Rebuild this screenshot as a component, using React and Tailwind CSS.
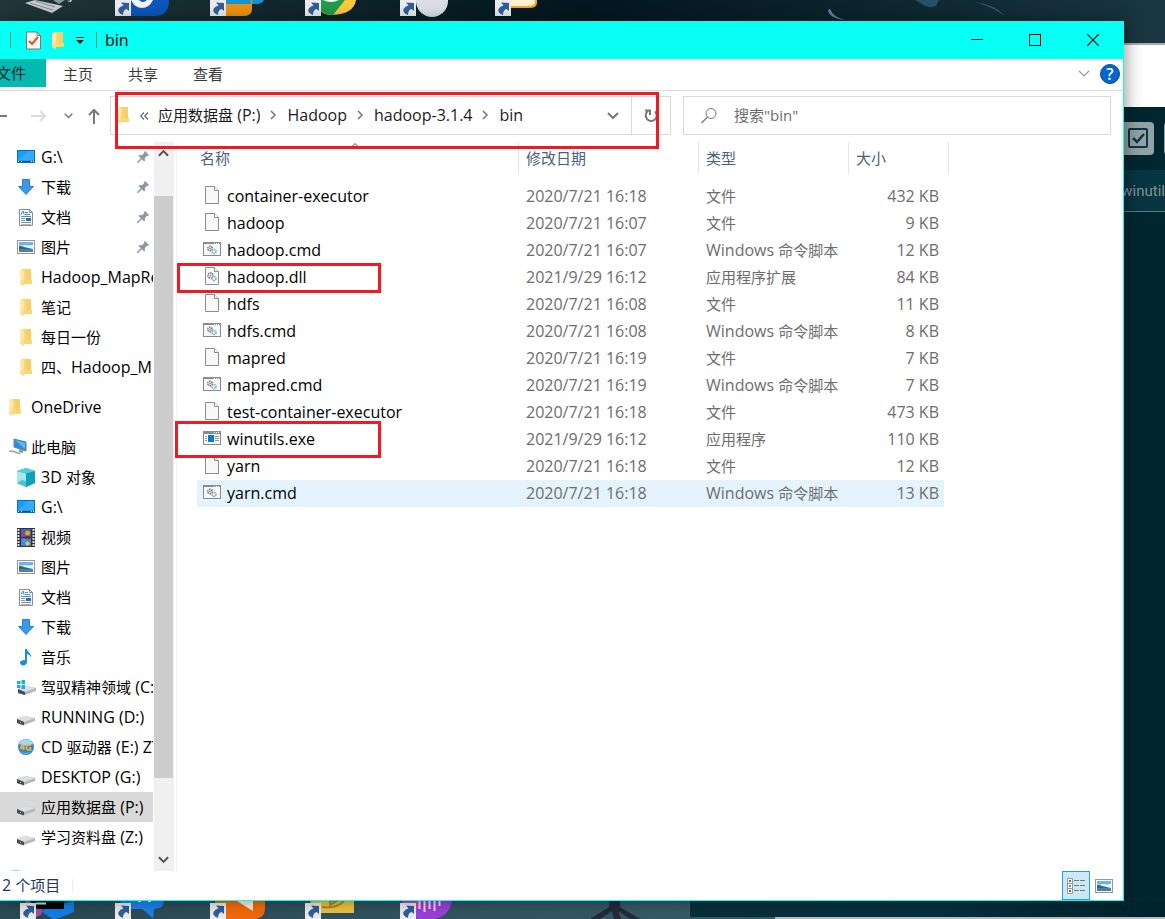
import React from 'react';

const FONT = "font-['Open_Sans','Noto_Sans_CJK_SC',sans-serif]";

/* ---------- small icons ---------- */

const FolderIcon = () => (
  <svg width="12" height="17" viewBox="0 0 12 17" className="shrink-0">
    <path d="M2 0h9v11h1v4H3z" fill="#f8d775" />
    <path d="M6 0h5v11H7z" fill="#f5cf68" />
    <path d="M0 0l4 2v15l-4-2z" fill="#fde9a9" />
    <path d="M0 15l4 2V8z" fill="#fbdf8e" />
  </svg>
);

const DriveScreenIcon = () => (
  <svg width="18" height="14" viewBox="0 0 18 14" className="shrink-0">
    <rect x="0.5" y="0.5" width="17" height="12" fill="#1a9fff" stroke="#0b6cb8" />
    <path d="M1 10L12 1h5v9z" fill="#33abff" />
    <rect x="1" y="11" width="16" height="1" fill="#0a4f8c" />
    <path d="M1 11h1v1H1zM4 11h1v1H4zM14 11h1v1h-1zM16 11h1v1h-1z" fill="#fff" />
  </svg>
);

const DownloadIcon = () => (
  <svg width="18" height="18" viewBox="0 0 18 18" className="shrink-0">
    <path d="M5.500 1.500h7v7h4L9 16.500 1.500 8.500h4z" fill="#3b97e8" stroke="#2a7fce" />
  </svg>
);

const DocumentIcon = () => (
  <svg width="18" height="19" viewBox="0 0 18 19" className="shrink-0">
    <path d="M2.500 1.500h10l3 3v13h-13z" fill="#fbfcfd" stroke="#8a8f94" />
    <path d="M12.500 1v3.500h3" fill="none" stroke="#8a8f94" />
    <path d="M4 6.500l1.500-3h1l.5 3" fill="none" stroke="#1d86d1" />
    <path d="M8 4.500h3M8 6.500h5M4 8.500h10" stroke="#3c95d6" />
    <path d="M4 10.500h4M4 12.500h4M4 14.500h10" stroke="#8b9299" />
    <path d="M4 16.500h10" stroke="#b4b9bd" />
    <rect x="9" y="10" width="5" height="3" fill="#2c6fa6" />
  </svg>
);

const PictureIcon = () => (
  <svg width="18" height="14" viewBox="0 0 18 14" className="shrink-0">
    <rect x="0.5" y="0.5" width="17" height="13" fill="#fff" stroke="#979797" />
    <rect x="2" y="2" width="14" height="10" fill="#a9d4f8" />
    <rect x="2" y="2" width="14" height="3" fill="#6fb0f4" />
    <path d="M4 7l4-2 4 1 4-1v4H5z" fill="#e8f5fd" />
    <path d="M2 6c4 0 7 2 14 3v1H2z" fill="#3a6b5a" />
    <path d="M2 9h14v3H2z" fill="#4682b8" />
  </svg>
);

const ComputerIcon = () => (
  <svg width="19" height="18" viewBox="0 0 19 18" className="shrink-0">
    <path d="M6 1l12 3v9L6 9z" fill="#2d8fd8" stroke="#6a8191" />
    <path d="M7 2l10 3v6z" fill="#5cb8f4" />
    <path d="M11 11v3l4 1v-3z" fill="#8b979e" />
    <path d="M0 13l4-1 10 3-3 1.500z" fill="#c9ced2" />
    <path d="M1 13.500l3-.5 8 2.500" fill="none" stroke="#98a0a5" />
  </svg>
);

const CubeIcon = () => (
  <svg width="18" height="19" viewBox="0 0 18 19" className="shrink-0">
    <path d="M9 0l9 3v12l-9 4-9-4V3z" fill="#1db3cc" />
    <path d="M0 3l9 2.500V19l-9-4z" fill="#a4e9ef" />
    <path d="M9 5.500L18 3v12l-9 4z" fill="#0fa0bd" />
    <path d="M9 0l9 3-9 2.500L0 3z" fill="#56cfdc" />
    <path d="M5 12l4 1v6l-9-4z" fill="#4cc3cf" />
  </svg>
);

const VideoIcon = () => (
  <svg width="18" height="19" viewBox="0 0 18 19" className="shrink-0">
    <rect width="18" height="19" fill="#333" />
    <path d="M1.500 1v18M16.500 1v18" stroke="#ddd" strokeDasharray="2 1" strokeWidth="2" />
    <rect x="4" y="1" width="10" height="8" fill="#3b63c5" />
    <rect x="4" y="10" width="10" height="8" fill="#4a7fe0" />
    <circle cx="10.500" cy="5" r="2.500" fill="#e8a61f" />
    <rect x="4" y="6" width="4" height="2" fill="#c8326f" />
    <rect x="8" y="8" width="5" height="3" fill="#7a3021" />
    <circle cx="7.500" cy="13" r="2" fill="#20a4ef" />
    <circle cx="10.500" cy="15.500" r="2" fill="#f1cc23" />
  </svg>
);

const MusicIcon = () => (
  <svg width="18" height="18" viewBox="0 0 18 18" className="shrink-0">
    <path d="M8 1h2c0 3 5 4 4 9-.5-3-2-3.500-4-4v8c0 2-2 3.500-4 3.500S3 16 3 14.500 5 12 8 12z" fill="#1590dd" />
  </svg>
);

const DriveIcon = () => (
  <svg width="18" height="18" viewBox="0 0 18 18" className="shrink-0">
    <path d="M0 11l8-3 10 2v3l-11 4-7-2z" fill="#b5b8ba" />
    <path d="M0 11l8-3 10 2-11 4z" fill="#dcdee0" />
    <path d="M0 11l7 3v3.500L0 15z" fill="#484b4d" />
    <path d="M3 14h1v1H3z" fill="#8ae07c" />
  </svg>
);

const WinDriveIcon = () => (
  <svg width="19" height="18" viewBox="0 0 19 18" className="shrink-0">
    <path d="M1 11l8-3 10 2v3L8 17l-7-2z" fill="#b5b8ba" />
    <path d="M1 11l8-3 10 2-11 4z" fill="#dcdee0" />
    <path d="M1 11l7 3v3l-7-2z" fill="#484b4d" />
    <path d="M0 3h3.500v3H0zM4.500 2H8v4H4.500zM0 7h3.500v3H0zM4.500 7H8v4H4.500z" fill="#0fb0f2" />
  </svg>
);

const DiscIcon = () => (
  <svg width="18" height="18" viewBox="0 0 18 18" className="shrink-0">
    <circle cx="9" cy="9" r="8" fill="#2d86d8" />
    <path d="M2 6a7.500 7.500 0 0 1 14 0q-7 3-14 0z" fill="#a9d6f6" />
    <path d="M3 13q6 4 12 0-6 6-12 0z" fill="#7cc1f2" />
    <path d="M6 6L3.500 10H8M6.500 7v5M14 7h-3q-1.500 0-1.500 2.500T11 12h2.500v-2H12" fill="none" stroke="#ffb31f" strokeWidth="1.500" />
  </svg>
);

const PinIcon = () => (
  <svg width="12" height="12" viewBox="0 0 12 12" className="shrink-0">
    <path d="M8 0l4 4-1 1-1-.3L7.800 7 8 9.500 7 10.500 4.800 8.200 1 12H0v-1l3.800-3.800L1.500 5l1-1L5 4.200 7.300 2 7 1z" fill="#8c99a3" />
  </svg>
);

const FileIcon = ({ gears }) => (
  <svg width="18" height="19" viewBox="0 0 18 19" className="shrink-0">
    <path d="M2.500.5h9l4 4v13h-13z" fill="#f8f8f8" stroke="#8c8c8c" />
    <path d="M11.500.5v4h4" fill="#fff" stroke="#8c8c8c" />
    {gears && (
      <>
        <circle cx="7.500" cy="8.500" r="2.500" fill="none" stroke="#777" strokeWidth="1.500" strokeDasharray="1.500 .7" />
        <circle cx="7.500" cy="8.500" r="1" fill="#999" />
        <circle cx="11" cy="11.500" r="2" fill="#e8f4fb" stroke="#7fa9c4" strokeWidth="1.500" strokeDasharray="1.500 .6" />
      </>
    )}
  </svg>
);

const CmdIcon = () => (
  <svg width="18" height="15" viewBox="0 0 18 15" className="shrink-0">
    <rect x="0.5" y="0.5" width="17" height="13" fill="#f7f7f7" stroke="#8a8a8a" />
    <rect x="0" y="0" width="18" height="2" fill="#878c8f" />
    <path d="M11 1h1v1h-1zM13 1h1v1h-1zM15 1h1v1h-1z" fill="#fff" />
    <circle cx="7" cy="6.500" r="2.300" fill="none" stroke="#777" strokeWidth="1.500" strokeDasharray="1.500 .7" />
    <circle cx="7" cy="6.500" r="1" fill="#999" />
    <circle cx="11" cy="9.500" r="2" fill="#e8f4fb" stroke="#7fa9c4" strokeWidth="1.500" strokeDasharray="1.500 .6" />
  </svg>
);

const ExeIcon = () => (
  <svg width="18" height="15" viewBox="0 0 18 15" className="shrink-0">
    <rect x="0.5" y="0.5" width="17" height="13" fill="#f7f7f7" stroke="#8a8a8a" />
    <rect x="0" y="0" width="18" height="3" fill="#878c8f" />
    <path d="M11 1h1v1h-1zM13 1h1v1h-1zM15 1h1v1h-1z" fill="#fff" />
    <rect x="5" y="4" width="6" height="7" fill="#0a78dc" />
    <path d="M2 5.500h2M2 7.500h2M2 9.500h2M12 5.500h4M12 7.500h4M12 9.500h4" stroke="#999" />
  </svg>
);

const CrumbArrow = () => (
  <svg width="7" height="10" viewBox="0 0 7 10" className="shrink-0">
    <path d="M1 1l4 4-4 4" fill="none" stroke="#777" strokeWidth="1.500" />
  </svg>
);

const Chevron = ({ size = 12, color = '#6d6d6d', up, thin }) => (
  <svg width={size} height="8" viewBox="0 0 12 8" className={up ? 'rotate-180' : ''}>
    <path d="M1 1l5 5 5-5" fill="none" stroke={color} strokeWidth={thin ? 1.2 : 2} />
  </svg>
);

/* ---------- data ---------- */

const quickAccess = [
  { name: 'G:\\', icon: DriveScreenIcon, pinned: true },
  { name: '下载', icon: DownloadIcon, pinned: true },
  { name: '文档', icon: DocumentIcon, pinned: true },
  { name: '图片', icon: PictureIcon, pinned: true },
  { name: 'Hadoop_MapRe', icon: FolderIcon },
  { name: '笔记', icon: FolderIcon },
  { name: '每日一份', icon: FolderIcon },
  { name: '四、Hadoop_M', icon: FolderIcon },
];

const thisPc = [
  { name: '3D 对象', icon: CubeIcon },
  { name: 'G:\\', icon: DriveScreenIcon },
  { name: '视频', icon: VideoIcon },
  { name: '图片', icon: PictureIcon },
  { name: '文档', icon: DocumentIcon },
  { name: '下载', icon: DownloadIcon },
  { name: '音乐', icon: MusicIcon },
  { name: '驾驭精神领域 (C:', icon: WinDriveIcon },
  { name: 'RUNNING (D:)', icon: DriveIcon },
  { name: 'CD 驱动器 (E:) ZT', icon: DiscIcon },
  { name: 'DESKTOP (G:)', icon: DriveIcon },
  { name: '应用数据盘 (P:)', icon: DriveIcon, selected: true },
  { name: '学习资料盘 (Z:)', icon: DriveIcon },
];

const files = [
  { name: 'container-executor', date: '2020/7/21 16:18', type: '文件', size: '432 KB' },
  { name: 'hadoop', date: '2020/7/21 16:07', type: '文件', size: '9 KB' },
  { name: 'hadoop.cmd', date: '2020/7/21 16:07', type: 'Windows 命令脚本', size: '12 KB', kind: 'cmd' },
  { name: 'hadoop.dll', date: '2021/9/29 16:12', type: '应用程序扩展', size: '84 KB', kind: 'dll', mark: '-left-5 -top-px h-[30px] w-[204px]' },
  { name: 'hdfs', date: '2020/7/21 16:08', type: '文件', size: '11 KB' },
  { name: 'hdfs.cmd', date: '2020/7/21 16:08', type: 'Windows 命令脚本', size: '8 KB', kind: 'cmd' },
  { name: 'mapred', date: '2020/7/21 16:19', type: '文件', size: '7 KB' },
  { name: 'mapred.cmd', date: '2020/7/21 16:19', type: 'Windows 命令脚本', size: '7 KB', kind: 'cmd' },
  { name: 'test-container-executor', date: '2020/7/21 16:18', type: '文件', size: '473 KB' },
  { name: 'winutils.exe', date: '2021/9/29 16:12', type: '应用程序', size: '110 KB', kind: 'exe', mark: '-left-[22px] -top-[5px] h-[37px] w-[206px]' },
  { name: 'yarn', date: '2020/7/21 16:18', type: '文件', size: '12 KB' },
  { name: 'yarn.cmd', date: '2020/7/21 16:18', type: 'Windows 命令脚本', size: '13 KB', kind: 'cmd', hovered: true },
];

// Chinese runs are set one pixel smaller than the latin ones
const Label = ({ children }) =>
  children.split(/([\u3000-\u9fff]+)/).map((part, i) =>
    i % 2 ? <span key={i} className="text-[15px]">{part}</span> : part
  );

/* ---------- desktop ---------- */

const Shortcut = () => (
  <g>
    <rect width="16" height="16" fill="#ececec" />
    <path d="M6 2.500l8 .5v8l-2.500-2Q8 10 8 15 2 12.500 3.500 9 5 6 8.500 5.500z" fill="#2f5f9f" />
  </g>
);

const DesktopIcon = ({ children, plain }) => (
  <svg width="95" height="21" viewBox="0 0 95 21" className="shrink-0">
    {children}
    {!plain && <Shortcut />}
  </svg>
);

const DesktopTop = () => (
  <div className="flex h-[21px] overflow-hidden bg-linear-to-r from-[#21373a] via-[#04161f] to-[#193641] pl-5">
    <DesktopIcon plain>
      <path d="M5 3l10-3 28 6-11 7z" fill="#c9cdcf" />
      <path d="M10 3l23 7M15 1l20 6" stroke="#7f8b90" />
      <path d="M33 0h12l-6 4z" fill="#8797a0" />
      <path d="M47 1l5-1-1 2z" fill="#dfe4e7" />
    </DesktopIcon>
    <DesktopIcon>
      <path d="M8 0h46q0 16-14 16H8z" fill="#0d56bb" />
      <path d="M16 0h22q-4 8-11 8T16 0z" fill="#f2f5fa" />
      <path d="M24 0h8q-2 2-4 2t-4-2z" fill="#0d56bb" />
    </DesktopIcon>
    <DesktopIcon>
      <path d="M16 0h38q-2 4-8 4H16z" fill="#1495d3" />
      <path d="M16 4h25V0h1v4h-1v-1h1v5q0 8-9 8H16z" fill="#ec930f" />
      <path d="M16 5h17V4h9v4q0 8-9 8H16z" fill="#ec930f" />
    </DesktopIcon>
    <DesktopIcon>
      <path d="M12 0h39q-2 14-24 15-15 0-15-15z" fill="#fdc93a" />
      <path d="M6 0h34L28 15Q14 15 6 0z" fill="#229b4c" />
      <path d="M18 0h16q-8 4-16 0z" fill="#f2f7f2" />
    </DesktopIcon>
    <DesktopIcon>
      <circle cx="32" cy="1" r="16" fill="#dcdfe8" />
    </DesktopIcon>
    <DesktopIcon>
      <path d="M14 0h28v3q0 5-8 5H14z" fill="#f4a724" />
      <path d="M14 0h26v2q0 4-7 4H14z" fill="#fdf3d0" />
    </DesktopIcon>
    <svg height="21" viewBox="0 0 575 21" className="min-w-0 flex-1" preserveAspectRatio="xMinYMid slice">
      <path d="M238 10q1 8 17 10-12-3-15-11z" fill="#6fa9bf" opacity=".8" />
      <path d="M325 0h24l-3 6q-8 3-14-2z" fill="#2f7088" opacity=".6" />
      <path d="M385 2q18 2 30 14-14-10-30-14z" fill="#3c7386" opacity=".8" />
    </svg>
  </div>
);

const DesktopBottom = () => (
  <div className="flex h-[18px] overflow-hidden bg-linear-to-r from-[#2a4854] to-[#3e6773] pl-5">
    <DesktopIcon plain>
      <path d="M5 0h20l-4 14-10 4z" fill="#a94ca9" />
      <path d="M24 8l30-8v11l-20 8-12-8z" fill="#137de8" />
      <path d="M10 0h34v8H17z" fill="#050505" />
      <path d="M16 2.500h10" stroke="#ddd" strokeWidth="2" />
      <g transform="translate(0 2)"><Shortcut /></g>
    </DesktopIcon>
    <DesktopIcon plain>
      <path d="M5 0h44q-1 8-10 8l-1 9-11-9H10z" fill="#1c82e8" />
      <path d="M23 0h3v1h-3zM33 0h3v1h-3z" fill="#fff" />
      <g transform="translate(0 2)"><Shortcut /></g>
    </DesktopIcon>
    <DesktopIcon plain>
      <path d="M5 0h50v7q0 11-12 11H5z" fill="#f26a0b" />
      <path d="M27 0h16v10z" fill="#fbeee4" />
      <g transform="translate(0 2)"><Shortcut /></g>
    </DesktopIcon>
    <DesktopIcon plain>
      <path d="M5 0h44v12H10z" fill="#edc242" />
      <path d="M17 6q14 2 22-6M25 0h7l-7 4z" fill="none" stroke="#a98829" strokeWidth="2" />
      <g transform="translate(0 2)"><Shortcut /></g>
    </DesktopIcon>
    <DesktopIcon plain>
      <path d="M2 0h50q-3 18-25 19Q5 18 2 0z" fill="#9c3fd8" />
      <path d="M2 0h20L12 17Q4 12 2 0z" fill="#d13fb0" />
      <path d="M19.500 0v8M24.500 0v11M29.500 0v8M34.500 0v10M39.500 0v5" stroke="#f1d9fa" strokeWidth="2" />
      <g transform="translate(0 2)"><Shortcut /></g>
    </DesktopIcon>
    <svg width="194" height="18" viewBox="0 0 194 18" className="shrink-0">
      <path d="M114 0h11v6l20 12h-10l-12-8 3 8h-7l-2-8-12 8h-10l19-12z" fill="#252a3a" />
    </svg>
    <div className="flex flex-1 flex-col">
      <div className="h-4 border-l border-[#4b5a5f] bg-linear-to-r from-[#06303b] via-[#05323d] to-[#00232c]" />
      <div className="ml-[86px] h-[2px] bg-[#b9babb]" />
    </div>
  </div>
);

const BackgroundWindow = () => (
  <div className="flex w-[41px] shrink-0 flex-col overflow-hidden bg-[#002730]">
    <div className="h-[22px] bg-[#193641]" />
    <div className="h-16 border-t-2 border-[#aaaab0] bg-white" />
    <div className="flex h-[63px] items-center gap-[10px]">
      <div className="flex h-[33px] w-[30px] shrink-0 items-center justify-center rounded-r bg-[#93a3a3] pr-[2px]">
        <svg width="22" height="22" viewBox="0 0 22 22">
          <rect x="2" y="1" width="18" height="18" rx="1" fill="none" stroke="#07384a" strokeWidth="2" />
          <path d="M6 10l4 4 7-8" fill="none" stroke="#07384a" strokeWidth="2.500" />
        </svg>
      </div>
      <div className="h-[33px] w-[30px] shrink-0 rounded-l bg-[#93a3a3]" />
    </div>
    <div className="flex h-[42px] justify-end whitespace-nowrap border-b border-[#5c7880] bg-[#073541] font-['Roboto',sans-serif] text-[15px] leading-[43px] text-[#819496]">
      winutil
    </div>
  </div>
);

/* ---------- explorer window ---------- */

const TitleBar = () => (
  <div className="flex h-[38px] items-center bg-[#08fff3] pr-px text-black">
    <div className="ml-[10px] h-4 w-px bg-[#0a9e97]" />
    <button className="ml-[15px]" aria-label="属性">
      <svg width="15" height="19" viewBox="0 0 15 19">
        <path d="M.5 1h10.500l3.500 3.500v13.500H.5z" fill="#fafafa" stroke="#7d7575" />
        <path d="M11 1v3.500h3.500" fill="none" stroke="#7d7575" />
        <path d="M3 10l3 3 6-7" fill="none" stroke="#e8541c" strokeWidth="2.200" />
      </svg>
    </button>
    <button className="ml-[11px]" aria-label="新建文件夹"><FolderIcon /></button>
    <button className="ml-3" aria-label="自定义快速访问工具栏">
      <svg width="8" height="7" viewBox="0 0 8 7">
        <path d="M0 .5h8" stroke="#111" />
        <path d="M0 3h8L4 7z" fill="#111" />
      </svg>
    </button>
    <div className="ml-3 h-4 w-px bg-[#0a9e97]" />
    <h1 className="ml-2 flex-1 text-base leading-[38px]">bin</h1>
    <button className="flex h-full w-[58px] items-center justify-center" aria-label="最小化">
      <svg width="12" height="12" viewBox="0 0 12 12"><path d="M0 5.500h12" stroke="#000" /></svg>
    </button>
    <button className="flex h-full w-[58px] items-center justify-center" aria-label="最大化">
      <svg width="12" height="12" viewBox="0 0 12 12"><rect x=".5" y=".5" width="11" height="11" fill="none" stroke="#000" /></svg>
    </button>
    <button className="flex h-full w-[58px] items-center justify-center" aria-label="关闭">
      <svg width="12" height="12" viewBox="0 0 12 12"><path d="M0 0l12 12M12 0L0 12" stroke="#000" strokeWidth="1.200" /></svg>
    </button>
  </div>
);

const Ribbon = () => (
  <div className="flex h-8 items-start border-b border-[#dadbdc] text-[15px] leading-[30px] text-[#3a3a3a]">
    <button className="flex h-7 w-[46px] justify-end overflow-hidden whitespace-nowrap bg-[#04b9b0] pr-5 leading-[28px] text-[#10282a]">文件</button>
    <nav className="flex flex-1 gap-px">
      <button className="px-[17px]">主页</button>
      <button className="px-[17px]">共享</button>
      <button className="px-[17px]">查看</button>
    </nav>
    <div className="flex h-[30px] items-center gap-[10px] pr-[3px]">
      <button aria-label="展开功能区"><Chevron size={12} color="#999" thin /></button>
      <button className="h-5 w-5 rounded-full border border-[#0b4a91] bg-[#0567cc] text-center text-base font-semibold leading-[18px] text-white">?</button>
    </div>
  </div>
);

const AddressRow = () => (
  <div className="flex h-[51px] items-start pr-3 pt-[5px]">
    <div className="flex h-[39px] w-[110px] shrink-0 items-center">
      <button aria-label="后退">
        <svg width="7" height="14" viewBox="0 0 7 14"><path d="M0 7h7" stroke="#777" strokeWidth="2" /></svg>
      </button>
      <button className="ml-6" aria-label="前进">
        <svg width="15" height="12" viewBox="0 0 15 12"><path d="M0 6h14M9 1l5 5-5 5" fill="none" stroke="#dcdcdc" strokeWidth="2" /></svg>
      </button>
      <button className="ml-[18px]" aria-label="最近浏览的位置"><Chevron size={9} color="#777" /></button>
      <button className="ml-[15px]" aria-label="上移">
        <svg width="12" height="16" viewBox="0 0 12 16"><path d="M6 16V2M1 7l5-5 5 5" fill="none" stroke="#777" strokeWidth="2" /></svg>
      </button>
    </div>

    <div className="relative flex h-[39px] w-[561px] shrink-0 items-center border border-[#d9d9d9] text-base text-[#1b1b1b]">
      <div className="ml-[6px]"><FolderIcon /></div>
      <button className="ml-[11px] w-[18px]" aria-label="上级目录">
        <svg width="9" height="8" viewBox="0 0 9 8"><path d="M4 .5L.8 4 4 7.500M8 .5L4.800 4 8 7.500" fill="none" stroke="#666" strokeWidth="1.200" /></svg>
      </button>
      <div className="flex flex-1 items-center gap-[10px] whitespace-nowrap pb-[2px]">
        <button><Label>应用数据盘 (P:)</Label></button>
        <CrumbArrow />
        <button>Hadoop</button>
        <CrumbArrow />
        <button>hadoop-3.1.4</button>
        <CrumbArrow />
        <button>bin</button>
      </div>
      <button className="flex h-full w-[38px] items-center justify-center border-r border-[#d9d9d9]" aria-label="上一个位置"><Chevron size={12} color="#777" /></button>
      <button className="flex h-full w-[38px] items-center justify-center" aria-label="刷新">
        <svg width="16" height="16" viewBox="0 0 16 16">
          <path d="M12 3.500a5.500 5.500 0 1 1-7-.5" fill="none" stroke="#777" strokeWidth="2" />
          <path d="M2 2.500h5V7" fill="none" stroke="#777" strokeWidth="2" />
        </svg>
      </button>
      <div className="absolute -top-[5px] left-1 z-10 h-[57px] w-[544px] border-3 border-[#ed1c24]" />
    </div>

    <label className="ml-3 flex h-[39px] min-w-0 flex-1 items-center border border-[#d9d9d9] pl-[17px]">
      <svg width="16" height="16" viewBox="0 0 16 16" className="shrink-0">
        <circle cx="10" cy="5.500" r="5" fill="none" stroke="#777" />
        <path d="M6.500 9L.5 15" stroke="#777" strokeWidth="1.200" />
      </svg>
      <input type="text" aria-label="搜索" placeholder={'搜索"bin"'} className="ml-[17px] min-w-0 flex-1 text-[15px] outline-none placeholder:text-[#6d6d6d]" />
    </label>
  </div>
);

const NavItem = ({ item }) => {
  const Icon = item.icon;
  return (
    <a href="#" className={`flex h-[30px] items-center whitespace-nowrap pl-[17px] ${item.selected ? 'bg-[#d9d9d9]' : ''}`}>
      <span className="flex w-[18px] shrink-0 justify-center"><Icon /></span>
      <span className="ml-[6px] min-w-0 flex-1 overflow-hidden"><Label>{item.name}</Label></span>
      {item.pinned && <span className="mr-1 shrink-0"><PinIcon /></span>}
    </a>
  );
};

const SideBar = () => (
  <aside className="flex w-[177px] shrink-0 border-r border-[#f3f3f3]">
    <div className="w-[153px] overflow-hidden text-base text-black">
      {quickAccess.map((item) => <NavItem key={item.name} item={item} />)}
      <a href="#" className="my-[10px] flex h-[30px] items-center pl-[9px]">
        <FolderIcon /><span className="ml-[10px]">OneDrive</span>
      </a>
      <a href="#" className="flex h-[30px] items-center pl-2">
        <ComputerIcon /><span className="ml-1"><Label>此电脑</Label></span>
      </a>
      {thisPc.map((item) => <NavItem key={item.name} item={item} />)}
      <svg width="12" height="2" viewBox="0 0 12 2" className="ml-[10px] mt-[17px]">
        <path d="M0 2q6-3 12 0z" fill="#a5dbf5" />
      </svg>
    </div>
    <div className="ml-px flex w-5 flex-col items-center bg-[#f0f0f0] pr-px">
      <div className="flex h-[54px] shrink-0 items-start pt-[7px]"><Chevron size={11} color="#505050" up /></div>
      <div className="w-[19px] grow-[588] basis-0 bg-[#cdcdcd]" />
      <div className="flex grow-[87] basis-0 items-end pb-[7px]"><Chevron size={11} color="#505050" /></div>
    </div>
  </aside>
);

const FileRow = ({ file }) => {
  const bg = file.hovered ? 'bg-[#e5f3ff]' : '';
  return (
    <tr className="h-[27px]">
      <td className={bg}>
        <div className="relative flex h-[27px] items-center pl-[6px] text-black">
          <span className="pb-[2px]">
            {file.kind === 'cmd' && <CmdIcon />}
            {file.kind === 'exe' && <ExeIcon />}
            {(!file.kind || file.kind === 'dll') && <FileIcon gears={file.kind === 'dll'} />}
          </span>
          <span className="ml-[6px]">{file.name}</span>
          {file.mark && <span className={`absolute z-10 border-3 border-[#ed1c24] ${file.mark}`} />}
        </div>
      </td>
      <td className={`pl-[7px] ${bg}`}>{file.date}</td>
      <td className={`pl-[7px] ${bg}`}><Label>{file.type}</Label></td>
      <td className={`pr-[5px] text-right ${bg}`}>{file.size}</td>
      <td />
    </tr>
  );
};

const FileList = () => (
  <main className="min-w-0 flex-1 pl-5">
    <table className="w-[752px] table-fixed text-base leading-[27px] text-[#6d6d6d]">
      <colgroup>
        <col className="w-[322px]" />
        <col className="w-[180px]" />
        <col className="w-[150px]" />
        <col className="w-[95px]" />
        <col className="w-[5px]" />
      </colgroup>
      <thead className="text-left text-[15px] text-[#4c607a]">
        <tr className="h-[41px] align-top">
          <th className="font-normal">
            <div className="relative h-8 border-r border-[#e5e5e5] pl-[3px] leading-[32px]">
              名称
              <svg width="8" height="5" viewBox="0 0 8 5" className="absolute left-[154px] top-0">
                <path d="M1 4.500l3-3 3 3" fill="none" stroke="#555" />
              </svg>
            </div>
          </th>
          <th className="font-normal"><div className="h-8 border-r border-[#e5e5e5] pl-[7px] leading-[32px]">修改日期</div></th>
          <th className="font-normal"><div className="h-8 border-r border-[#e5e5e5] pl-[7px] leading-[32px]">类型</div></th>
          <th colSpan={2} className="font-normal"><div className="h-8 border-r border-[#e5e5e5] pl-[7px] leading-[32px]">大小</div></th>
        </tr>
      </thead>
      <tbody>
        {files.map((file) => <FileRow key={file.name} file={file} />)}
      </tbody>
    </table>
  </main>
);

const StatusBar = () => (
  <footer className="flex h-[29px] items-center text-base text-[#1e395b]">
    <span className="pb-[2px] pl-[2px]"><Label>2 个项目</Label></span>
    <span className="ml-3 h-[13px] w-px bg-[#ededed]" />
    <div className="ml-auto flex h-full items-center gap-[5px] pr-[10px]">
      <button className="flex h-[29px] w-7 items-center justify-center border border-[#26a0da] bg-[#cce8f6]" aria-label="详细信息">
        <svg width="18" height="16" viewBox="0 0 18 16">
          <path d="M.5.500h5v15h-5zM.5 5.500h5M.5 10.500h5" fill="#fff" stroke="#979797" />
          <path d="M2 2h2v2H2z" fill="#2f7fc0" />
          <path d="M2 7h2v2H2z" fill="#7d8f2f" />
          <path d="M2 12h2v2H2z" fill="#c4421c" />
          <path d="M7 2.500h5M13 2.500h5M7 7.500h5M13 7.500h5M7 12.500h5M13 12.500h5" stroke="#777" />
        </svg>
      </button>
      <button aria-label="大缩略图"><PictureIcon /></button>
    </div>
  </footer>
);

const App = () => {
  return (
    <div className={`flex min-h-screen flex-col overflow-hidden bg-[#002730] ${FONT}`}>
      <DesktopTop />
      <div className="flex flex-1">
        <div className="relative z-10 flex min-w-0 flex-1 flex-col border-b border-r border-[#08fff3] bg-white shadow-[2px_0_16px_rgba(0,0,0,0.4)]">
          <TitleBar />
          <Ribbon />
          <AddressRow />
          <div className="flex flex-1">
            <SideBar />
            <FileList />
          </div>
          <StatusBar />
        </div>
        <BackgroundWindow />
      </div>
      <DesktopBottom />
    </div>
  );
};

export default App;
